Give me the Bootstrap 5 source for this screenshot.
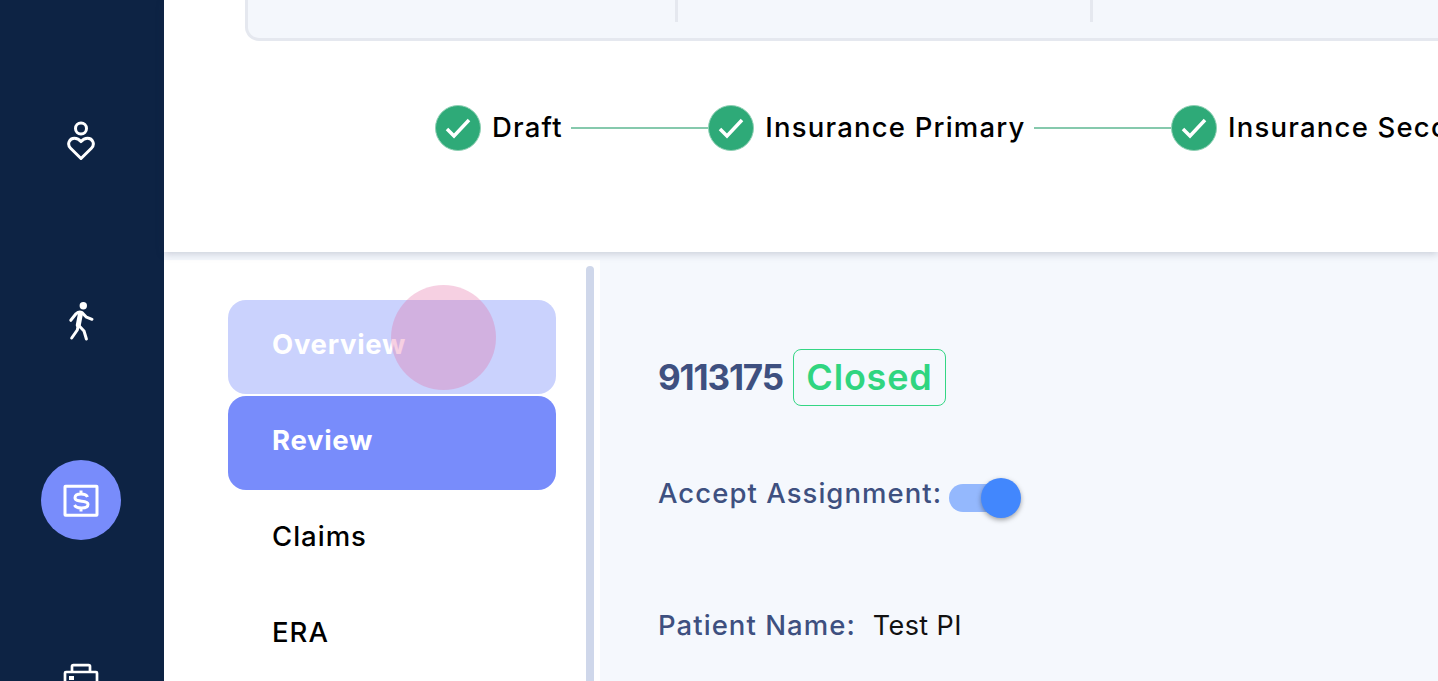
<!doctype html>
<html lang="en">
<head>
<meta charset="utf-8">
<title>Claim review</title>
<link href="https://cdn.jsdelivr.net/npm/bootstrap@5.3.0/dist/css/bootstrap.min.css" rel="stylesheet">
<style>
html,body{height:681px;overflow:hidden}
body{font-family:"Inter","Liberation Sans",sans-serif;background:#f5f8fd;color:#000}
.app-shell{height:681px}
.rail{width:164px;flex:none;background:#0d2344;padding:50px 2px 0 0;overflow:hidden}
.rail-item{height:180px;flex:none}
.rail-badge{width:80px;height:80px;border-radius:50%;background:#788cfb}
.rail svg{display:block}
.work{min-width:0}
.top-area{height:252px;background:#fff;box-shadow:0 2px 8px rgba(40,50,80,.22);overflow:hidden;flex:none;position:relative;z-index:1}
.summary-box{height:41px;width:1400px;margin-left:81px;background:#f4f7fc;border:3px solid #e5e8ef;border-top:0;border-radius:0 0 14px 14px}
.summary-cell{height:22px;border-right:3px solid #e5e8ef;flex:none}
.summary-cell.one{width:430px}
.summary-cell.two{width:415px}
.stepper{margin:64px 0 0 271px;white-space:nowrap;width:1200px}
.step-dot{width:46px;height:46px;border-radius:50%;background:#2eaa78;flex:none;border:1px solid #8fd0b4}
.step-label{font-size:27.5px;font-weight:500;margin:0 8.500px 0 11px;letter-spacing:1.2px}
.step-line{height:2px;background:#86c9ad;flex:none;width:137px}
.lower{min-height:0;margin-top:8px}
.side-panel{width:436px;flex:none;background:#fff;padding:6px 6px 0 64px;overflow:hidden}
.side-nav{width:328px;margin:34px 30px 0 0;flex:none}
.side-link{height:94px;flex:none;border-radius:18px;margin-bottom:2px;padding:0 0 4px 44px;color:#000;font-size:27.5px;font-weight:500;display:flex;align-items:center;letter-spacing:1px}
.side-link.faded{background:#cad2fd;color:#fff;font-weight:700;letter-spacing:.7px}
.side-link.active-link{background:#788cfb;color:#fff;font-weight:700;letter-spacing:.7px}
.thumb{width:8px;background:#cfd7ea;border-radius:4px 4px 0 0;flex:none}
.detail{padding:89px 0 0 58px;min-width:0}
.claim-no{font-size:35px;font-weight:700;color:#3e5080;line-height:57px;letter-spacing:-1.15px}
.status-tag{margin-left:10px;width:153px;height:57px;padding-bottom:2px;border:1px solid #34d684;border-radius:8px;color:#30d580;font-size:36px;font-weight:600;background:transparent;letter-spacing:.8px}
.field-label{font-size:27.5px;font-weight:500;color:#3e5080;letter-spacing:1.05px}
.assign-row{margin-top:67px;height:49px}
.toggle-track{width:61px;height:28px;border-radius:14px;background:#94b8fd;margin:11px 0 0 7px;position:relative}
.toggle-knob{position:absolute;right:-11px;top:-6px;width:40px;height:40px;border-radius:50%;background:#4287fd;box-shadow:0 2px 5px rgba(0,0,0,.35)}
.patient-row{margin-top:83px}
.patient-value{font-size:27px;margin-left:17px;color:#111;letter-spacing:.4px}
.touch-dot{position:absolute;left:227px;top:25px;width:105px;height:105px;border-radius:50%;background:rgba(226,110,165,.32);z-index:3;pointer-events:none}
</style>
</head>
<body>
<div class="app-shell d-flex">
  <nav class="rail d-flex flex-column align-items-center">
    <div class="rail-item d-flex align-items-center justify-content-center">
      <svg width="30" height="42" viewBox="0 -1 30 42" fill="none" stroke="#fff" stroke-width="3" stroke-linejoin="round"><circle cx="15" cy="8.500" r="5.500"/><path d="M15 38.500 4.600 28.200c-4-4-1.200-10 3.800-10 2.800 0 5 1.400 6.600 3.400 1.600-2 3.800-3.400 6.600-3.400 5 0 7.800 6 3.800 10z"/></svg>
    </div>
    <div class="rail-item d-flex align-items-center justify-content-center">
      <svg width="30" height="42" viewBox="66 299 30 42" fill="none" stroke="#fff" stroke-linecap="round" stroke-linejoin="round"><circle cx="83.300" cy="305.700" r="3.700" fill="#fff" stroke="none"/><path stroke-width="3" d="M70.800 320.300 76 313.800q3-2.800 6-1.200l4.500 4.600 5.500 2.100"/><path stroke-width="5" d="M80.300 314.500 78.300 325"/><path stroke-width="3" d="M78.300 325l-1 5-5.600 8M78.300 325l5.700 6 2.400 8"/></svg>
    </div>
    <div class="rail-item d-flex align-items-center justify-content-center">
      <div class="rail-badge d-flex align-items-center justify-content-center">
        <svg width="36" height="34" viewBox="0 0 36 34" fill="none" stroke="#fff" stroke-width="3"><rect x="2" y="3.200" width="32" height="29" rx=".5"/><path d="M24.500 14c-.8-2-2.800-3-6.500-3-3.800 0-6 1.500-6 3.800 0 5.400 13 1.500 13 6.500 0 2.300-2.500 3.700-6.500 3.700-3.800 0-6-1-7-3M18 7.500V11M18 25v3.500"/></svg>
      </div>
    </div>
    <div class="rail-item d-flex align-items-center justify-content-center">
      <svg width="36" height="34" viewBox="0 0 36 34" fill="none" stroke="#fff" stroke-width="2.700"><path d="M9 9V3.500c0-.8.600-1.400 1.400-1.400h15.200c.8 0 1.400.6 1.400 1.400V9"/><rect x="2" y="9" width="32" height="23" rx="1"/><rect x="6" y="13" width="5" height="4" fill="#fff" stroke="none"/><path d="M2 20h32"/></svg>
    </div>
  </nav>
  <div class="work flex-grow-1 d-flex flex-column">
    <header class="top-area">
      <div class="summary-box d-flex">
        <div class="summary-cell one"></div>
        <div class="summary-cell two"></div>
      </div>
      <div class="stepper d-flex align-items-center">
        <span class="step-dot d-flex align-items-center justify-content-center"><svg width="28" height="24" viewBox="0 0 28 24" fill="none" stroke="#fff" stroke-width="3.500"><path d="M3 13l7 7L25 4"/></svg></span>
        <span class="step-label">Draft</span>
        <span class="step-line"></span>
        <span class="step-dot d-flex align-items-center justify-content-center"><svg width="28" height="24" viewBox="0 0 28 24" fill="none" stroke="#fff" stroke-width="3.500"><path d="M3 13l7 7L25 4"/></svg></span>
        <span class="step-label">Insurance Primary</span>
        <span class="step-line"></span>
        <span class="step-dot d-flex align-items-center justify-content-center"><svg width="28" height="24" viewBox="0 0 28 24" fill="none" stroke="#fff" stroke-width="3.500"><path d="M3 13l7 7L25 4"/></svg></span>
        <span class="step-label">Insurance Secondary</span>
      </div>
    </header>
    <div class="lower flex-grow-1 d-flex position-relative">
      <aside class="side-panel d-flex">
        <div class="nav flex-column flex-nowrap side-nav">
          <a class="nav-link side-link faded" href="#">Overview</a>
          <a class="nav-link side-link active-link" href="#">Review</a>
          <a class="nav-link side-link" href="#">Claims</a>
          <a class="nav-link side-link" href="#">ERA</a>
        </div>
        <div class="thumb"></div>
      </aside>
      <main class="detail flex-grow-1">
        <div class="d-flex align-items-center">
          <span class="claim-no">9113175</span>
          <span class="status-tag d-flex align-items-center justify-content-center">Closed</span>
        </div>
        <div class="assign-row d-flex align-items-start">
          <span class="field-label">Accept Assignment:</span>
          <span class="toggle-track"><span class="toggle-knob"></span></span>
        </div>
        <div class="patient-row d-flex align-items-baseline">
          <span class="field-label">Patient Name:</span>
          <span class="patient-value">Test PI</span>
        </div>
      </main>
      <div class="touch-dot" aria-hidden="true"></div>
    </div>
  </div>
</div>
<script src="https://cdn.jsdelivr.net/npm/bootstrap@5.3.0/dist/js/bootstrap.bundle.min.js"></script>
</body>
</html>
